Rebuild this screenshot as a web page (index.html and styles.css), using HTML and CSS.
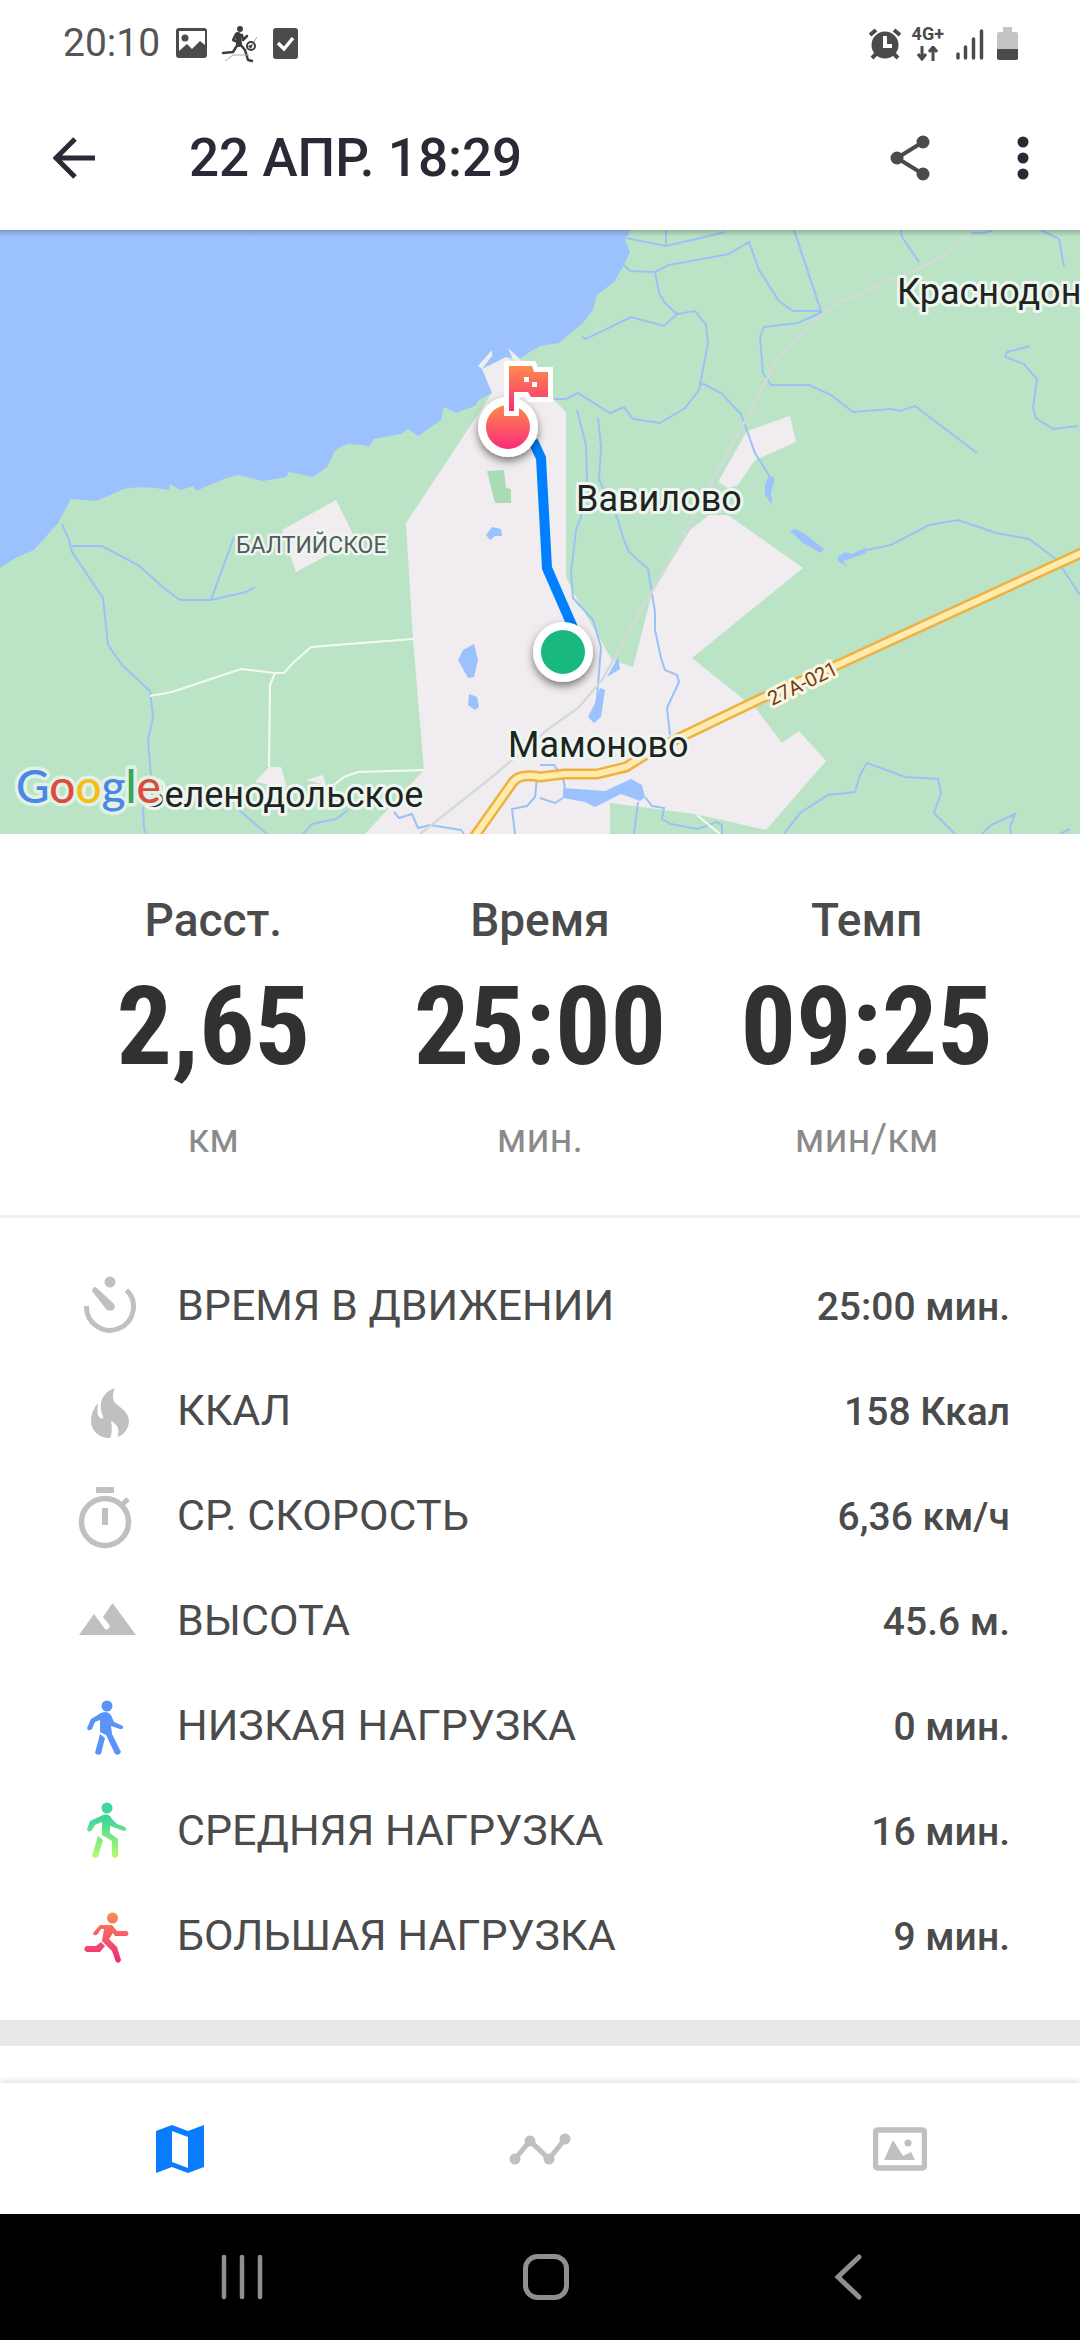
FILE: index.html
```html
<!DOCTYPE html>
<html lang="ru">
<head>
<meta charset="utf-8">
<meta name="viewport" content="width=device-width, initial-scale=1">
<title>22 апр. 18:29</title>
<link rel="stylesheet" href="styles.css">
</head>
<body>
<div class="app">
  <div class="status">
    <span class="clock">20:10</span>
    <svg class="status-notes" viewBox="176 20 124 44" width="124" height="44" aria-hidden="true">
      <path fill="#4b4b4b" fill-rule="evenodd" d="M179 27h25a3 3 0 0 1 3 3v24a3 3 0 0 1-3 3h-25a3 3 0 0 1-3-3V30a3 3 0 0 1 3-3zm0 3v20l8-7 5 5 8-8 5 4V30z"/>
      <circle cx="185" cy="37" r="3.5" fill="#4b4b4b"/>
      <circle cx="240" cy="28" r="3" fill="#3d3d3d"/>
      <path d="M238 34l1 9" stroke="#3d3d3d" stroke-width="6" stroke-linecap="round"/>
      <path d="M236 33l-3 6 5 2M242 34l1 5 4-4M238 43l-5 8-10 1M240 43l5 6 3 10 4 1" fill="none" stroke="#3d3d3d" stroke-width="2.500" stroke-linecap="round" stroke-linejoin="round"/>
      <path d="M225 60l8-6h16M254 41l3-5" fill="none" stroke="#aaa" stroke-width="1"/>
      <circle cx="251" cy="45" r="4" fill="#fff" stroke="#3d3d3d" stroke-width="2"/><path d="M248 45l5-2-2 5z" fill="#3d3d3d"/>
      <rect x="273" y="27" width="25" height="31" rx="3" fill="#4b4b4b"/>
      <path d="M278 42l6 6 9-11" fill="none" stroke="#fff" stroke-width="3.5"/>
    </svg>
    <span class="status-radio">
      <svg viewBox="866 24 32 36" width="32" height="36" aria-hidden="true">
        <circle cx="882" cy="44" r="13.5" fill="#4b4b4b"/>
        <path d="M867 34l6-5M897 34l-6-5M869 57l5-5M895 57l-5-5" stroke="#4b4b4b" stroke-width="4"/>
        <path d="M882 35v10h7" fill="none" stroke="#fff" stroke-width="4"/>
      </svg>
      <span class="network">4G+
        <svg viewBox="0 0 22 15" width="22" height="15" aria-hidden="true"><path d="M5 0v12M1 8l4 5 4-5M16 15V3M12 6l4-5 4 5" fill="none" stroke="#4b4b4b" stroke-width="3"/></svg>
      </span>
      <svg viewBox="954 24 64 36" width="64" height="36" aria-hidden="true">
        <path d="M957 53v4M964.500 46v11M972.500 38v19M980.500 30v27" stroke="#4b4b4b" stroke-width="3.500" stroke-linecap="round"/>
        <path d="M1002 26h9v5h4q2 0 2 2v15h-21V33q0-2 2-2h4z" fill="#c4c4c4"/>
        <path d="M996 48h21v9q0 2-2 2h-17q-2 0-2-2z" fill="#4b4b4b"/>
      </svg>
    </span>
  </div>

  <header class="bar">
    <button class="icon-btn" aria-label="Назад"><svg viewBox="0 0 42 42" width="42" height="42"><path d="M42 21H4M22 2L3 21l19 19" fill="none" stroke="#2a2935" stroke-width="5"/></svg></button>
    <h1 class="title">22 АПР. 18:29</h1>
    <button class="icon-btn share" aria-label="Поделиться"><svg viewBox="0 0 40 46" width="40" height="46"><path d="M33 7L7 23l26 16" fill="none" stroke="#4b4b4b" stroke-width="4"/><g fill="#4b4b4b"><circle cx="33" cy="7" r="6.500"/><circle cx="7" cy="23" r="6.500"/><circle cx="33" cy="39" r="6.500"/></g></svg></button>
    <button class="icon-btn" aria-label="Ещё"><svg viewBox="0 0 12 44" width="12" height="44"><g fill="#2a2935"><circle cx="6" cy="6" r="5.500"/><circle cx="6" cy="22" r="5.500"/><circle cx="6" cy="38" r="5.500"/></g></svg></button>
  </header>

  <svg class="map" viewBox="0 230 1080 604" role="img" aria-label="Карта маршрута">
    <defs>
      <linearGradient id="finish" x1="0" y1="0" x2="0" y2="1"><stop offset="0" stop-color="#fd8c4b"/><stop offset="1" stop-color="#fb2a78"/></linearGradient>
      <linearGradient id="shade" x1="0" y1="0" x2="0" y2="1"><stop offset="0" stop-opacity=".2"/><stop offset="1" stop-opacity="0"/></linearGradient>
      <filter id="drop" x="-50%" y="-50%" width="200%" height="200%"><feDropShadow dx="0" dy="4" stdDeviation="4" flood-opacity=".5"/></filter>
    </defs>
    <rect y="230" width="1080" height="604" fill="#bbe4c7"/>
    <path class="water" d="M0 230H631L625 239 630 252 624 265 614 282 597 295 593 310 583 323 559 343 540 346 528 353 520 359 506 357 492 393 479 400 475 406 456 413 444 407 441 420 418 436 408 429 401 434 374 439 369 447 363 445 348 444Q336 448 334 453L327 467 313 477 289 472 286 477 263 481 238 475 224 479 196 491 193 486 181 490 170 484 169 490 Q140 485 124 489L96 501 71 499 58 523 43 540 34 550 17 557 0 568z"/>
    <g class="town">
      <path d="M492 393L406 523 413 639 424 770 365 834H610V803L695 814 766 830 826 761 799 731 782 743 757 710 692 658 803 568 728 515H709L690 530 652 593 633 667 612 660 573 592 566 577V412L554 400 520 359 508 348 514 362 506 357 482 369z"/>
      <path d="M482 369l-4-3 14-16v6zM747 431L790 416 796 442 755 460 738 485 728 488 718 482zM282 530L336 500 356 540 296 572zM255 782L269 767H281L287 787zM306 780L323 775 326 785z"/>
    </g>
    <path d="M487 471L504 470 506 488 511 489V503H495z" fill="#a9dcb4"/>
    <g class="water">
      <path d="M486 535L492 527 501 529 502 536 495 536 490 540zM474 644L478 660 474 677 468 678 458 660 463 650zM469 694L477 697 479 707 475 710 468 705zM618 657L620 669 607 677zM600 688L605 690 601 717 594 723 588 717 595 703z"/>
      <path d="M769 476L774 477 774 483 771 492 772 505 765 495 765 485zM790 531L795 529 805 534 824 549 821 553 803 543zM838 557L845 552 852 554 867 547 866 553 852 558 843 561 848 567 838 561z"/>
      <path d="M563 788L605 791 631 779 642 785 645 797 640 801 621 794 595 807 585 802 563 798z"/>
    </g>
    <path class="stream" d="M62 524L69 540 72 552 103 598 108 645 122 665 150 691 153 718 148 740 151 777 143 810 144 828 146 834M72 546H102L138 565 164 588 180 600H211L234 537M211 600L246 592 255 587M239 810L267 834M303 834L312 824 336 819 348 810M394 812L399 818 412 814 418 828 430 825 461 830 464 834M515 834L512 809 527 806 535 797 537 777M540 765H554L563 778 565 788M540 798L555 803 563 798M645 797L652 806 664 808 662 819 671 824 698 829 716 822 722 825V834M638 802L634 834M784 834L800 813 828 795 855 792 860 775 867 763 905 777 938 779 941 793 934 813 955 834M982 834L991 825 1015 814 1010 827 1011 834M1060 834L1070 829"/>
    <path class="stream" d="M577 410L586 445 587 480 581 517 576 530 571 573 573 598 593 620 601 647 596 710M598 418L601 447 599 480 614 508 624 540 629 552 648 569 655 612V630L661 658 665 670 677 675 679 682 667 708 670 735M626 238L666 246 726 232M666 230V246M624 265L630 271 655 272 669 265 729 254 749 242 759 270 779 301 793 311H821L794 230M655 272L659 293 665 303 677 314 664 326 631 317 586 339 582 337M677 314L695 311 706 325 708 343 699 390 685 408 660 423 633 419 624 407 610 413 578 393 566 399H554M699 385L704 384 721 393 741 414 755 453 770 477M822 312L798 323 764 327 760 337 763 373 771 385H809L831 395 853 412 891 409 900 411 915 406 977 453M901 230L902 237 919 262M1041 230L1059 239 1064 267M969 233H984L993 230M1030 346L1007 352 1005 357 1024 364 1037 379 1033 408 1036 418 1053 429 1078 426M867 550L891 545 929 525 958 520 996 533 1029 539 1057 560 1080 595"/>
    <path d="M150 696L172 692 241 669 275 673H284L293 663 311 647 413 639M275 673L270 685 269 767M334 785L344 777 358 772 424 770M697 815L720 834" fill="none" stroke="#f3faf4" stroke-width="2"/>
    <path d="M971 232L950 252 922 267 884 283 840 302 812 322 778 358 747 417 712 482 681 540 602 680 578 708 547 730 492 777 420 834" fill="none" stroke="#d3dad8" stroke-width="2.500"/>
    <path d="M472 840L513 782Q520 773 540 777L564 774H597L626 767 650 752 683 736 760 699 833 667 1088 550" fill="none" stroke="#eeb142" stroke-width="11"/>
    <path d="M472 840L513 782Q520 773 540 777L564 774H597L626 767 650 752 683 736 760 699 833 667 1088 550" fill="none" stroke="#ffebae" stroke-width="6"/>
    <g class="place">
      <text x="897" y="304">Краснодон</text>
      <text x="576" y="511">Вавилово</text>
      <text x="508" y="757">Мамоново</text>
      <text x="143" y="807">Зеленодольское</text>
    </g>
    <text class="district" x="236" y="553">БАЛТИЙСКОЕ</text>
    <text class="route-no" transform="translate(772 706) rotate(-26)">27A-021</text>
    <text class="logo" x="16" y="803"><tspan fill="#4a86e8">G</tspan><tspan fill="#dd4b3e">o</tspan><tspan fill="#f5bd17">o</tspan><tspan fill="#4a86e8">g</tspan><tspan fill="#37a65a">l</tspan><tspan fill="#dd4b3e">e</tspan></text>
    <path d="M533 441L541 458 547 568 574 630" fill="none" stroke="#0080fe" stroke-width="10"/>
    <g filter="url(#drop)" fill="#fff"><circle cx="508" cy="427" r="30"/><circle cx="563" cy="652" r="30"/></g>
    <circle cx="508" cy="427" r="22" fill="url(#finish)"/>
    <circle cx="563" cy="652" r="22" fill="#19b87e"/>
    <path d="M509 366H532L534 372H548V397H531L528 392H514V411H509z" fill="#fff" stroke="#fff" stroke-width="10"/>
    <path d="M509 366H532L534 372H548V397H531L528 392H514V411H509z" fill="url(#finish)"/>
    <path d="M524 377h5v5h-5zM532 382h5v5h-5z" fill="#fff"/>
    <rect y="230" width="1080" height="7" fill="url(#shade)"/>
  </svg>

  <main class="content">
    <section class="stats">
      <div class="stat"><span class="stat-name">Расст.</span><strong class="stat-value">2,65</strong><span class="stat-unit">км</span></div>
      <div class="stat"><span class="stat-name">Время</span><strong class="stat-value">25:00</strong><span class="stat-unit">мин.</span></div>
      <div class="stat"><span class="stat-name">Темп</span><strong class="stat-value">09:25</strong><span class="stat-unit">мин/км</span></div>
    </section>
    <dl class="details">
      <div class="row">
        <dt><svg viewBox="0 0 60 72" width="60" height="72" aria-hidden="true"><path d="M10.500 35a23.500 23.500 0 1 0 40-16" fill="none" stroke="#c0c0c0" stroke-width="5"/><circle cx="34" cy="11" r="5.500" fill="#c0c0c0"/><path d="M17 17q2-2 4 0l17 16q2 4-1 6-4 2-7-1L16 20z" fill="#c0c0c0"/></svg><span class="label">ВРЕМЯ В ДВИЖЕНИИ</span></dt><dd>25:00 мин.</dd>
      </div>
      <div class="row">
        <dt><svg viewBox="0 0 60 72" width="60" height="72" aria-hidden="true"><path d="M38.700 12Q35 22 39 27C44 32 53 35 53 46Q52 57 41.500 61Q45 50 35 45Q37 56 34 62H31C22 61 15 54 15 45Q15 35 22 27Q20 39 24 42Q28 44 27 40C21 26 28 16 38.700 12z" fill="#c0c0c0"/></svg><span class="label">ККАЛ</span></dt><dd>158 Ккал</dd>
      </div>
      <div class="row">
        <dt><svg viewBox="0 0 60 72" width="60" height="72" aria-hidden="true"><circle cx="29" cy="41" r="23.500" fill="none" stroke="#c0c0c0" stroke-width="5.500"/><path d="M20 6h18v6H20zM26 27h6v17h-6z" fill="#c0c0c0"/><path d="M45 25l7-7" stroke="#c0c0c0" stroke-width="5"/></svg><span class="label">СР. СКОРОСТЬ</span></dt><dd>6,36 км/ч</dd>
      </div>
      <div class="row">
        <dt><svg viewBox="0 0 60 72" width="60" height="72" aria-hidden="true"><path d="M3 49L18 28 29 43Q32 45 34 40L27 31 36.500 17 60 49z" fill="#c0c0c0"/></svg><span class="label">ВЫСОТА</span></dt><dd>45.6 м.</dd>
      </div>
      <div class="row">
        <dt><svg viewBox="0 0 60 72" width="60" height="72" aria-hidden="true"><circle cx="31" cy="15" r="5.500" fill="#5b93f8"/><path d="M25 22Q31 19 35 24L38 31 47 35Q47 39 44 38L35 35 36 43 45 61Q43 65 39 63L30 44 24 41V29L19 31 16 38Q12 41 11 37L15 28zM24 43l5 4-4 16q-4 2-6-1z" fill="#5b93f8"/></svg><span class="label">НИЗКАЯ НАГРУЗКА</span></dt><dd>0 мин.</dd>
      </div>
      <div class="row">
        <dt><svg viewBox="0 0 60 72" width="60" height="72" aria-hidden="true"><defs><linearGradient id="mid" gradientUnits="userSpaceOnUse" x1="0" y1="6" x2="0" y2="62"><stop offset=".3" stop-color="#3fd69c"/><stop offset="1" stop-color="#b8fb68"/></linearGradient></defs><g fill="url(#mid)"><circle cx="31" cy="12" r="5.500"/><path d="M25 20Q32 16 36 23L41 28 49 31Q52 34 48 35L34 30 34 37 42 43V60Q39 64 36 60V45L26 39V26L19 29 16 34Q12 38 11 33L14 25zM22 40l5 4-5 17q-4 2-6-1z"/></g></svg><span class="label">СРЕДНЯЯ НАГРУЗКА</span></dt><dd>16 мин.</dd>
      </div>
      <div class="row">
        <dt><svg viewBox="0 0 60 72" width="60" height="72" aria-hidden="true"><defs><linearGradient id="high" gradientUnits="userSpaceOnUse" x1="0" y1="12" x2="0" y2="60"><stop offset="0" stop-color="#f98b52"/><stop offset="1" stop-color="#f02c79"/></linearGradient></defs><g fill="url(#high)"><circle cx="36.500" cy="17" r="5.500"/><path d="M24 24H36L41 30H51Q54 33 51 35H39L37 32 33 38 41 46 45 59Q44 63 40 61L36 50 26 40 28 28H25L22 33Q18 36 17 32zM25 41l4 4-5 6H11q-5-2-1-6h10z"/></g></svg><span class="label">БОЛЬШАЯ НАГРУЗКА</span></dt><dd>9 мин.</dd>
      </div>
    </dl>
  </main>

  <nav class="tabs" aria-label="Разделы">
    <button class="tab" aria-label="Карта"><svg viewBox="0 0 48 48" width="48" height="48"><path fill-rule="evenodd" d="M0 6L16 0 32 6 48 0V42L32 48 16 42 0 48zM16 6V37L32 43V12z" fill="#0a7cff"/></svg></button>
    <button class="tab" aria-label="Графики"><svg viewBox="0 0 62 32" width="62" height="32"><path d="M6 26L21 8 40 26 56 6" fill="none" stroke="#c0c0c0" stroke-width="5"/><g fill="#c0c0c0"><circle cx="6" cy="26" r="5.500"/><circle cx="21" cy="8" r="5.500"/><circle cx="40" cy="26" r="5.500"/><circle cx="56" cy="6" r="5.500"/></g></svg></button>
    <button class="tab" aria-label="Фото"><svg viewBox="0 0 54 44" width="54" height="44"><rect x="2.500" y="3" width="49" height="38" rx="2" fill="none" stroke="#c0c0c0" stroke-width="5.500"/><path d="M11 33L20 13 30 29 38 25 42 33z" fill="#c0c0c0"/><circle cx="35" cy="16" r="3.500" fill="#c0c0c0"/></svg></button>
  </nav>

  <div class="system">
    <button class="sys-btn" aria-label="Недавние"><svg viewBox="0 0 48 48" width="48" height="48"><path d="M6 4v40M24 4v40M42 4v40" stroke="#8f8f8f" stroke-width="4.500" stroke-linecap="round"/></svg></button>
    <button class="sys-btn" aria-label="Домой"><svg viewBox="0 0 48 48" width="48" height="48"><rect x="3.500" y="3.500" width="41" height="41" rx="12" fill="none" stroke="#8f8f8f" stroke-width="5"/></svg></button>
    <button class="sys-btn" aria-label="Назад"><svg viewBox="0 0 48 48" width="48" height="48"><path d="M33 4L12 24l21 20" fill="none" stroke="#8f8f8f" stroke-width="5" stroke-linecap="round"/></svg></button>
  </div>
</div>
</body>
</html>
```
FILE: styles.css
```css
* { box-sizing: border-box; }
body {
  margin: 0;
  background: #fff;
  color: #4b4b4b;
  font-family: Roboto, "Noto Sans", sans-serif;
}
button {
  display: flex;
  align-items: center;
  justify-content: center;
  padding: 0;
  border: 0;
  background: none;
}
svg { display: block; flex: none; }
.app { display: flex; flex-direction: column; min-height: 100vh; }

.status {
  display: flex;
  align-items: center;
  height: 86px;
  padding: 0 61px 0 63px;
  gap: 16px;
}
.clock { font-size: 39px; line-height: 48px; color: #555; }
.status-radio { display: flex; align-items: center; gap: 11px; margin-left: auto; }
.network {
  display: flex;
  flex-direction: column;
  align-items: center;
  gap: 4px;
  font-size: 18px;
  line-height: 16px;
  font-weight: 700;
}

.bar {
  display: flex;
  align-items: center;
  height: 144px;
  padding: 0 51px 0 53px;
}
.title {
  flex: 1;
  margin: 0 0 0 94px;
  font-size: 53px;
  line-height: 64px;
  font-weight: 500;
  color: #2a2935;
}
.share { margin-right: 87px; }

.map { width: 100%; height: auto; }
.water { fill: #9bc2ff; }
.town { fill: #f0ecef; }
.stream { fill: none; stroke: #9bc2f6; stroke-width: 2; }
.place, .district, .route-no, .logo { paint-order: stroke; stroke-linejoin: round; }
.place { font-size: 36px; fill: #1f2423; stroke: #edf7ef; stroke-width: 6px; }
.district { font-size: 23px; fill: #555a5e; stroke: #edf7ef; stroke-width: 5px; }
.route-no { font-size: 20px; fill: #743d0c; stroke: #fbf6e4; stroke-width: 6px; }
.logo { font-family: Lato, sans-serif; font-size: 46px; font-weight: 500; stroke: #dff2e4; stroke-width: 7px; }

.content { flex: 1; }
.stats {
  display: grid;
  grid-template-columns: repeat(3, 1fr);
  padding: 54px 50px 40px;
  border-bottom: 3px solid #f0f0f0;
}
.stat { display: flex; flex-direction: column; align-items: center; }
.stat-name { font-size: 46px; line-height: 64px; font-weight: 500; }
.stat-value {
  font-family: "Roboto Condensed", "Liberation Sans Narrow", Roboto, sans-serif;
  font-size: 110px;
  line-height: 150px;
  font-weight: 700;
  color: #313132;
}
.stat-unit { font-size: 40px; line-height: 73px; color: #8b8b8b; }

.details { margin: 0; padding: 36px 70px 31px 76px; border-bottom: 26px solid #e8e8e8; }
.row { display: flex; align-items: center; justify-content: space-between; height: 105px; }
dt { display: flex; align-items: center; gap: 41px; font-size: 43px; line-height: 52px; }
.label { padding-bottom: 4px; }
dd { margin: 0; font-size: 39px; line-height: 52px; font-weight: 500; }

.tabs {
  display: grid;
  grid-template-columns: repeat(3, 1fr);
  height: 131px;
  background: #fff;
  box-shadow: 0 -2px 6px rgba(0, 0, 0, .12);
}
.system {
  display: flex;
  justify-content: space-between;
  height: 126px;
  padding: 0 206px 0 218px;
  background: #000;
}
```
